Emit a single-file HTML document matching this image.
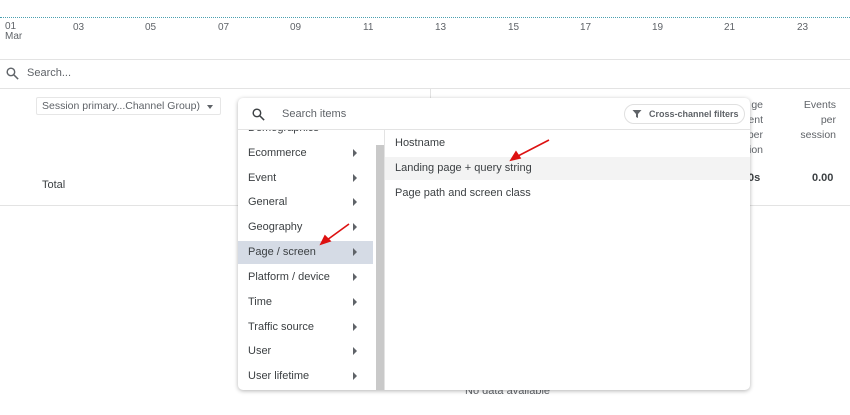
<!DOCTYPE html>
<html><head><style>
*{margin:0;padding:0;box-sizing:border-box}
body{width:850px;height:415px;background:#fff;font-family:"Liberation Sans",sans-serif;color:#3c4043;position:relative;overflow:hidden}
.a{position:absolute}
.ax{font-size:10px;color:#5f6368;top:22px}
.it{position:absolute;left:248px;font-size:11px;color:#3c4043}
.ar{position:absolute;left:353px;width:0;height:0;border-left:4px solid #5f6368;border-top:4px solid transparent;border-bottom:4px solid transparent}
.ri{position:absolute;left:395px;font-size:11px;color:#3c4043}
.h{font-size:10.5px;color:#5f6368;text-align:right}
</style></head><body>
<div class="a" style="left:0;top:17px;width:850px;border-top:1.5px dotted #4aa0b0"></div>
<div class="a ax" style="left:5px;line-height:10px">01<br>Mar</div>
<div class="a ax" style="left:73px">03</div><div class="a ax" style="left:145px">05</div>
<div class="a ax" style="left:218px">07</div><div class="a ax" style="left:290px">09</div>
<div class="a ax" style="left:363px">11</div><div class="a ax" style="left:435px">13</div>
<div class="a ax" style="left:508px">15</div><div class="a ax" style="left:580px">17</div>
<div class="a ax" style="left:652px">19</div><div class="a ax" style="left:724px">21</div>
<div class="a ax" style="left:797px">23</div>
<div class="a" style="left:0;top:59px;width:850px;border-top:1px solid #e3e3e3"></div>
<svg class="a" style="left:5px;top:66px" width="15" height="15" viewBox="0 0 24 24"><circle cx="9.5" cy="9.5" r="6" fill="none" stroke="#5f6368" stroke-width="2.3"/><path d="M14 14l7 7" stroke="#5f6368" stroke-width="2.5"/></svg>
<div class="a" style="left:27px;top:67px;font-size:11px;color:#5f6368">Search...</div>
<div class="a" style="left:0;top:88px;width:850px;border-top:1px solid #e3e3e3"></div>
<div class="a" style="left:430px;top:88px;height:12px;border-left:1px solid #e3e3e3"></div>
<div class="a" style="left:36px;top:97px;width:185px;height:18px;border:1px solid #e6e6e6;border-radius:2px;font-size:10.5px;color:#5f6368;padding:2px 0 0 5px;white-space:nowrap">Session primary...Channel Group)<span style="position:absolute;left:170px;top:7px;border-top:4px solid #5f6368;border-left:3px solid transparent;border-right:3px solid transparent"></span></div>
<div class="a" style="left:42px;top:179px;font-size:11px">Total</div>
<div class="a h" style="left:730px;top:98px;width:33px;line-height:15px">ge<br>ent<br>per<br>ion</div>
<div class="a h" style="left:790px;top:98px;width:46px;line-height:15px">Events<br>per<br>session</div>
<div class="a" style="left:748px;top:172px;font-size:11px;font-weight:bold;color:#3c4043">0s</div>
<div class="a" style="left:812px;top:172px;font-size:11px;font-weight:bold;color:#3c4043">0.00</div>
<div class="a" style="left:0;top:205px;width:850px;border-top:1px solid #e3e3e3"></div>
<div class="a" style="left:465px;top:385px;font-size:11px;color:#5f6368">No data available</div>
<div class="a" style="left:238px;top:98px;width:512px;height:292px;background:#fff;border-radius:5px;box-shadow:0 1px 4px rgba(0,0,0,.3);overflow:hidden">
 <div class="a" style="left:0;top:31px;width:512px;border-top:1px solid #e3e3e3"></div>
 <div class="a" style="left:138px;top:47px;width:8px;height:245px;background:#c9c9c9"></div>
 <div class="a" style="left:146px;top:31px;height:261px;border-left:1px solid #e3e3e3"></div>
 <div class="a" style="left:0;top:143px;width:135px;height:23px;background:#d5dbe5"></div>
 <div class="a" style="left:147px;top:59px;width:365px;height:23px;background:#f3f3f3"></div>
</div>
<svg class="a" style="left:251px;top:107px" width="15" height="15" viewBox="0 0 24 24"><circle cx="9.5" cy="9.5" r="6" fill="none" stroke="#3c4043" stroke-width="2.3"/><path d="M14 14l7 7" stroke="#3c4043" stroke-width="2.5"/></svg>
<div class="a" style="left:282px;top:108px;font-size:11px;color:#5f6368">Search items</div>
<div class="a" style="left:624px;top:104px;width:121px;height:20px;border:1px solid #e0e0e0;border-radius:10px;font-size:9px;font-weight:bold;color:#5f6368;padding:4px 0 0 24px;white-space:nowrap">Cross-channel filters</div>
<svg class="a" style="left:632px;top:109px" width="10" height="10" viewBox="0 0 10 10"><path d="M0.5 1h9L6 5v4L4 8V5z" fill="#5f6368"/></svg>
<div class="a" style="left:238px;top:130px;width:135px;height:5px;overflow:hidden"><div style="position:absolute;left:10px;top:-8px;font-size:11px">Demographics</div></div>
<div class="it" style="top:147px">Ecommerce</div><div class="ar" style="top:149px"></div>
<div class="it" style="top:172px">Event</div><div class="ar" style="top:174px"></div>
<div class="it" style="top:196px">General</div><div class="ar" style="top:198px"></div>
<div class="it" style="top:221px">Geography</div><div class="ar" style="top:223px"></div>
<div class="it" style="top:246px">Page / screen</div><div class="ar" style="top:248px"></div>
<div class="it" style="top:271px">Platform / device</div><div class="ar" style="top:273px"></div>
<div class="it" style="top:296px">Time</div><div class="ar" style="top:298px"></div>
<div class="it" style="top:321px">Traffic source</div><div class="ar" style="top:323px"></div>
<div class="it" style="top:345px">User</div><div class="ar" style="top:347px"></div>
<div class="it" style="top:370px">User lifetime</div><div class="ar" style="top:372px"></div>
<div class="ri" style="top:137px">Hostname</div>
<div class="ri" style="top:162px">Landing page + query string</div>
<div class="ri" style="top:187px">Page path and screen class</div>
<svg class="a" style="left:0;top:0" width="850" height="415"><g stroke="#d11" stroke-width="1.6" fill="#d11">
<path d="M349 224L327 240"/><path d="M321 244l4-8 5 5z"/>
<path d="M549 140L518 156"/><path d="M511 160l5-8 4 6z"/></g></svg>
</body></html>
